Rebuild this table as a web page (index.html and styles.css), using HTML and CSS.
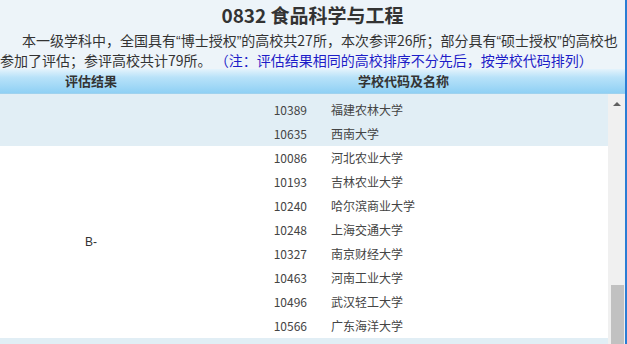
FILE: index.html
```html
<!DOCTYPE html>
<html lang="zh-CN">
<head>
<meta charset="utf-8">
<title>0832 食品科学与工程</title>
<link rel="stylesheet" href="styles.css">
</head>
<body>
<div class="page">
  <h1 class="title">0832 食品科学与工程</h1>
  <p class="intro">本一级学科中，全国具有<span class="q">“</span>博士授权<span class="q">”</span>的高校共27所，本次参评26所；部分具有<span class="q">“</span>硕士授权<span class="q">”</span>的高校也<br>参加了评估；参评高校共计79所。 <span class="note">（注：评估结果相同的高校排序不分先后，按学校代码排列）</span></p>
  <div class="thead">
    <div class="th th-grade">评估结果</div>
    <div class="th th-school">学校代码及名称</div>
  </div>
  <div class="tbody">
    <div class="rows">
      <div class="group group-blue group-top">
        <div class="grade"></div>
        <div class="list">
          <div class="row"><span class="code">10389</span><span class="name">福建农林大学</span></div>
          <div class="row"><span class="code">10635</span><span class="name">西南大学</span></div>
        </div>
      </div>
      <div class="group">
        <div class="grade">B-</div>
        <div class="list">
          <div class="row"><span class="code">10086</span><span class="name">河北农业大学</span></div>
          <div class="row"><span class="code">10193</span><span class="name">吉林农业大学</span></div>
          <div class="row"><span class="code">10240</span><span class="name">哈尔滨商业大学</span></div>
          <div class="row"><span class="code">10248</span><span class="name">上海交通大学</span></div>
          <div class="row"><span class="code">10327</span><span class="name">南京财经大学</span></div>
          <div class="row"><span class="code">10463</span><span class="name">河南工业大学</span></div>
          <div class="row"><span class="code">10496</span><span class="name">武汉轻工大学</span></div>
          <div class="row"><span class="code">10566</span><span class="name">广东海洋大学</span></div>
        </div>
      </div>
      <div class="group group-blue">
        <div class="grade"></div>
        <div class="list">
          <div class="row"></div>
        </div>
      </div>
    </div>
    <div class="scrollbar">
      <div class="arrow"></div>
      <div class="track"></div>
      <div class="thumb"></div>
    </div>
  </div>
</div>
</body>
</html>
```
FILE: styles.css
```css
html, body {
  margin: 0;
  padding: 0;
}
body {
  width: 627px;
  height: 344px;
  overflow: hidden;
  font-family: "Noto Sans CJK SC", "Noto Sans", sans-serif;
  color: #333;
  background: #ffffff;
}
.page {
  width: 625px;
  height: 344px;
  border-right: 2px solid #2a7dd4;
  background: #edf4f9;
  display: flex;
  flex-direction: column;
  overflow: hidden;
}
.title {
  margin: 0;
  height: 31px;
  line-height: 30px;
  font-size: 19px;
  font-weight: bold;
  text-align: center;
  color: #333;
}
.intro {
  margin: 0;
  font-size: 14px;
  line-height: 19px;
  text-indent: 22px;
  white-space: nowrap;
  color: #333;
  height: 38px;
}
.q {
  font-family: "Liberation Sans", sans-serif;
}
.note {
  color: #1d1dc8;
}
.thead {
  display: flex;
  height: 24px;
  flex: none;
  background: linear-gradient(to bottom, #e4f3fc 0%, #b8e2f9 35%, #8fd0f4 100%);
  border-bottom: 1px solid #9fd2ee;
}
.th {
  font-size: 13px;
  font-weight: bold;
  line-height: 24px;
  text-align: center;
  color: #333;
}
.th-grade {
  width: 182px;
}
.th-school {
  flex: 1;
}
.tbody {
  flex: 1;
  display: flex;
  min-height: 0;
}
.rows {
  flex: 1;
  display: flex;
  flex-direction: column;
  min-width: 0;
}
.group {
  display: flex;
  background: #ffffff;
  flex: none;
}
.group-blue {
  background: #e1eef5;
}
.group-top {
  padding-top: 4px;
}
.grade {
  width: 182px;
  flex: none;
  display: flex;
  align-items: center;
  justify-content: center;
  font-family: "Liberation Sans", "Noto Sans", sans-serif;
  font-size: 12px;
  color: #333;
}
.list {
  flex: 1;
  display: flex;
  flex-direction: column;
}
.row {
  display: flex;
  height: 24px;
  align-items: center;
  font-size: 12px;
  line-height: 16px;
  color: #444;
}
.code {
  width: 125px;
  text-align: right;
  flex: none;
}
.name {
  padding-left: 24px;
}
.scrollbar {
  width: 17px;
  flex: none;
  background: #f0f0f0;
  display: flex;
  flex-direction: column;
  align-items: center;
}
.arrow {
  width: 0;
  height: 0;
  margin-top: 8px;
  border-left: 4px solid transparent;
  border-right: 4px solid transparent;
  border-bottom: 4px solid #606060;
}
.track {
  flex: 1;
}
.thumb {
  width: 13px;
  height: 59px;
  margin-left: 2px;
  background: #c1c1c1;
}
```
